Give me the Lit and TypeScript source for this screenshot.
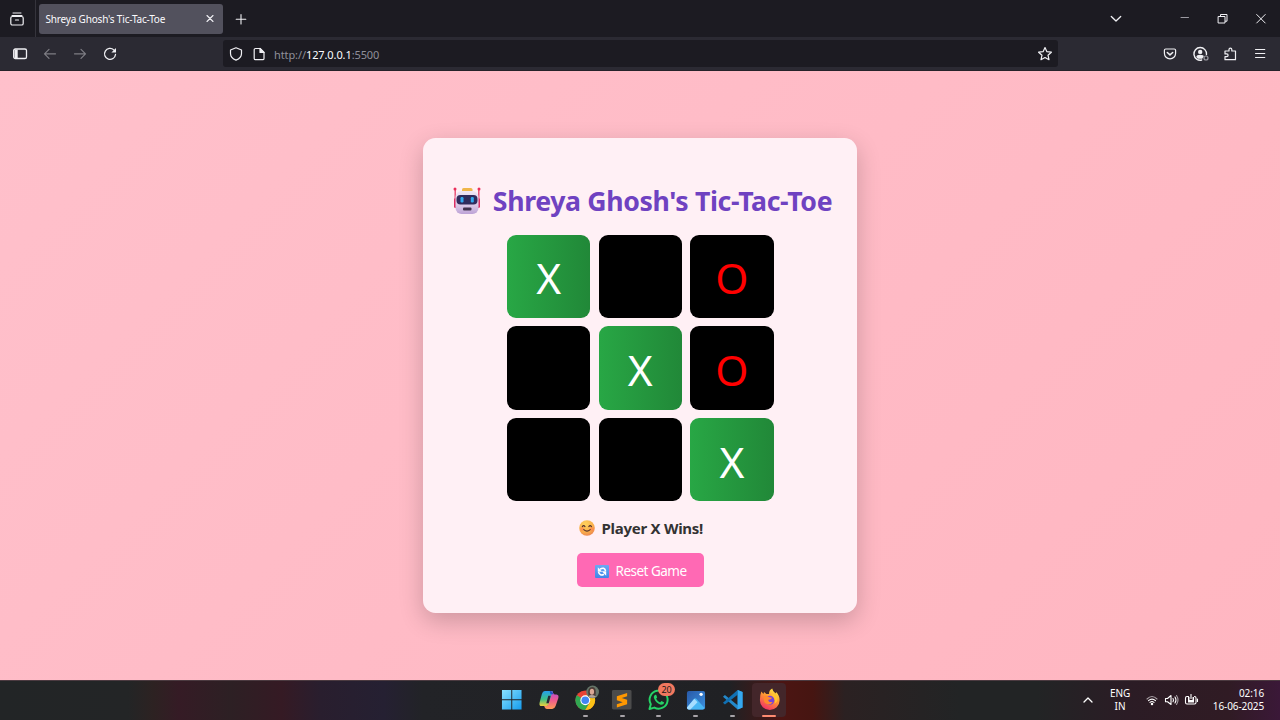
import { LitElement, html, svg, css } from "lit";
import { customElement, state } from "lit/decorators.js";
import { classMap } from "lit/directives/class-map.js";

const robot = html`<svg class="robot" viewBox="0 0 28 28">
  <defs><linearGradient id="rb" x1="0" y1="0" x2="0" y2="1"><stop offset="0" stop-color="#f0e6f6"/><stop offset=".6" stop-color="#dccbe8"/><stop offset="1" stop-color="#bda2d6"/></linearGradient></defs>
  <rect x="1.500" y="2" width="1.400" height="11" fill="#e8476f"/><rect x="25.100" y="2" width="1.400" height="11" fill="#e8476f"/>
  <circle cx="2" cy="2" r="1.500" fill="#ea2f5b"/><circle cx="26" cy="2" r="1.500" fill="#ea2f5b"/>
  <rect x="1" y="11" width="4" height="10" rx="1.600" fill="#dc2f64"/><rect x="23" y="11" width="4" height="10" rx="1.600" fill="#dc2f64"/>
  <rect x="9" y="1" width="10.500" height="5" rx="1.600" fill="#f0b64a"/>
  <rect x="2.500" y="4" width="23" height="23" rx="6" fill="url(#rb)"/>
  <rect x="3.500" y="8" width="21" height="9.500" rx="4" fill="#302b5c"/>
  <rect x="7.500" y="10" width="3" height="5.500" rx="1.200" fill="#32a8ef"/><rect x="17.800" y="10" width="3" height="5.500" rx="1.200" fill="#32a8ef"/>
  <rect x="10" y="20.500" width="8.500" height="3" rx="1" fill="#42334e"/></svg>`;

const smile = html`<svg class="smile" viewBox="0 0 16 16">
  <defs><radialGradient id="sm" cx=".4" cy=".25" r=".85"><stop offset="0" stop-color="#ffd35c"/><stop offset=".6" stop-color="#f9ae4c"/><stop offset="1" stop-color="#e87a50"/></radialGradient></defs>
  <circle cx="8" cy="8" r="7.800" fill="url(#sm)"/><circle cx="3.200" cy="9" r="2" fill="#ff7a4d" opacity=".5"/><circle cx="12.800" cy="9" r="2" fill="#ff7a4d" opacity=".5"/>
  <path d="M3.300 6.600q1.300-2 2.700 0M9.800 6.600q1.300-2 2.700 0M4.800 9.700q3.200 2.800 6.400 0" fill="none" stroke="#53302c" stroke-width="1.100" stroke-linecap="round"/></svg>`;

const refresh = html`<svg class="refresh" viewBox="0 0 14 13">
  <defs><linearGradient id="rf" x1="0" y1="0" x2="0" y2="1"><stop offset="0" stop-color="#6ba9f2"/><stop offset="1" stop-color="#3f86ea"/></linearGradient></defs>
  <rect width="14" height="13" rx="1" fill="url(#rf)"/>
  <path d="M5 4.200Q9.300 1.500 10.600 6M9 9.200Q5 11.500 3.500 7" fill="none" stroke="#fff" stroke-width="1.600"/>
  <path d="M2.800 2.300v4.400h4.400zM11.200 10.700V6.300H6.800z" fill="#fff"/></svg>`;

@customElement("browser-chrome")
export class BrowserChrome extends LitElement {
  static styles = css`
    :host { display: block; font-family: "Noto Sans", "Open Sans", sans-serif; color: #fbfbfe; }
    svg { display: block; flex: none; fill: none; stroke: #f0f0f4; stroke-width: 1.2; stroke-linecap: round; stroke-linejoin: round; }
    .tabs { height: 37px; background: #1c1b22; display: flex; align-items: center; }
    .view { width: 36px; height: 37px; border-right: 1px solid #35343c; display: grid; place-items: center; padding-right: 2px; box-sizing: border-box; }
    .tab { margin-left: 3px; width: 184px; height: 30px; box-sizing: border-box; border-radius: 3px; background: #52515d; display: flex; align-items: center; justify-content: space-between; padding: 1px 8px 0 6.500px; }
    .label { font-size: 10px; line-height: 14px; letter-spacing: -0.180px; white-space: nowrap; }
    .plus { margin-left: 12px; }
    .grow { flex: 1; }
    .list { margin-right: 56px; }
    .window { display: flex; align-items: center; gap: 26px; margin-right: 13px; }
    .bar { height: 34px; box-sizing: border-box; background: #2b2a33; border-bottom: 1px solid #252229; display: flex; align-items: center; }
    .nav { display: flex; gap: 14px; padding-left: 12px; width: 223px; box-sizing: border-box; }
    .dim { opacity: .42; }
    .url { width: 835px; height: 27px; box-sizing: border-box; border-radius: 3px; background: #1c1b22; display: flex; align-items: center; padding: 0 5px; }
    .page { margin-left: 7px; }
    .address { margin-left: 7px; flex: 1; color: #8f8f99; font-size: 11px; line-height: 16px; letter-spacing: -0.1px; padding-top: 2px; }
    .host { color: #fbfbfe; }
    .tools { flex: 1; display: flex; justify-content: flex-end; gap: 14px; padding-right: 12px; }
  `;
  render() {
    return html`
      <div class="tabs">
        <div class="view"><svg width="16" height="16" viewBox="0 0 16 16"><path d="M4 2h8M3 4.5h10" stroke-width="1"/><rect x="1.8" y="5.5" width="12.4" height="8.5" rx="1.6"/><path d="M6.5 9h3"/></svg></div>
        <div class="tab"><span class="label">Shreya Ghosh's Tic-Tac-Toe</span><svg width="10" height="10" viewBox="0 0 10 10"><path d="m2 1.5 6 6m0-6-6 6" stroke-width="1.100"/></svg></div>
        <svg class="plus" width="12" height="12" viewBox="0 0 12 12"><path d="M6 1.5v9.5M1.2 6.2h9.6" stroke-width="1.1"/></svg>
        <div class="grow"></div>
        <svg class="list" width="14" height="14" viewBox="0 0 14 14"><path d="m2.300 4.500 4.700 4.500L11.700 4.500" stroke-width="1.300"/></svg>
        <div class="window">
          <svg width="12" height="12" viewBox="0 0 12 12"><path d="M2 4.500h7.500" stroke="#9b9aa2" stroke-width="1"/></svg>
          <svg width="12" height="12" viewBox="0 0 12 12"><path d="M1.500 3.500h6.500v6.500H1.500zM3.500 3.300V1.500H10v6.700H8.300" stroke-width="1"/></svg>
          <svg width="12" height="12" viewBox="0 0 12 12"><path d="m1.700 1.500 8.500 8.500m0-8.500-8.500 8.500" stroke-width="1"/></svg>
        </div>
      </div>
      <div class="bar">
        <div class="nav">
          <svg width="16" height="16" viewBox="0 0 16 16"><rect x="1.700" y="3" width="12.800" height="9.500" rx="1.600" stroke-width="1.300"/><path d="M2.500 3.500h3.200v8.700H2.500z" fill="#f0f0f4" stroke="none"/></svg>
          <svg class="dim" width="16" height="16" viewBox="0 0 16 16"><path d="M13.500 7.800H2.800M7 3.300 2.500 7.800 7 12.300"/></svg>
          <svg class="dim" width="16" height="16" viewBox="0 0 16 16"><path d="M2.500 7.800h10.700M9 3.300l4.500 4.500L9 12.300"/></svg>
          <svg width="16" height="16" viewBox="0 0 16 16"><path d="M13.500 8.500A5.500 5.500 0 1 1 11.800 3.900l1.400 1.400" stroke-width="1.300"/><path d="M14 2v4.600H9.400z" fill="#f0f0f4" stroke="none"/></svg>
        </div>
        <div class="url">
          <svg width="16" height="16" viewBox="0 0 16 16"><path d="M8 1.800 13.500 4v3.400c0 3-2.500 5.500-5.500 6.700C5 12.900 2.500 10.400 2.500 7.400V4z"/></svg>
          <svg class="page" width="16" height="16" viewBox="0 0 16 16"><path d="M4.500 2.500h4.500l4 4v5.900a1.300 1.300 0 0 1-1.300 1.300H4.500a1.300 1.300 0 0 1-1.300-1.300V3.800a1.300 1.300 0 0 1 1.300-1.300z"/><path d="M9 2.500v4h4z" fill="#f0f0f4"/></svg>
          <span class="address">http://<span class="host">127.0.0.1</span>:5500</span>
          <svg width="16" height="16" viewBox="0 0 16 16"><path d="m8 1.600 1.900 4.100 4.500.5-3.400 3 1 4.500L8 11.500l-4 2.200 1-4.500-3.400-3 4.500-.5z"/></svg>
        </div>
        <div class="tools">
          <svg width="16" height="16" viewBox="0 0 16 16"><path d="M3.700 3h8.600a1.300 1.300 0 0 1 1.300 1.300v3a5.600 5.600 0 0 1-11.200 0v-3A1.300 1.300 0 0 1 3.700 3z"/><path d="m5.300 6.500 2.700 2.400 2.700-2.400" stroke-width="1.500"/></svg>
          <svg width="16" height="16" viewBox="0 0 16 16" overflow="visible"><path d="M14.500 8.500A6.300 6.300 0 1 0 9.700 14" stroke-width="1.400"/><circle cx="8.200" cy="5.900" r="2.200" fill="#f0f0f4" stroke="none"/><path d="M4.300 11Q4.500 8.800 8.200 8.800t3.500 1.700l-1.500 2.200H6z" fill="#f0f0f4" stroke="none"/><circle cx="14" cy="12" r="2" stroke="#9b9aa2"/></svg>
          <svg width="16" height="16" viewBox="0 0 16 16"><path d="M3 5H7V3.500a1.400 1.400 0 0 1 2.800 0V5H13.500v8.700H3v-3h1.700a1.400 1.400 0 0 0 0-2.800H3z"/></svg>
          <svg width="16" height="16" viewBox="0 0 16 16"><path d="M3.500 3.500h9.300M3.500 7.500h9.300M3.500 11.500h9.300" stroke-width="1"/></svg>
        </div>
      </div>`;
  }
}

@customElement("tic-tac-toe")
export class TicTacToe extends LitElement {
  static styles = css`
    :host { display: grid; place-items: center; background: linear-gradient(135deg, #ffc0cb, #ffb6c1); font-family: "Noto Sans", "Open Sans", sans-serif; }
    svg { display: block; flex: none; }
    .card { width: 433.500px; height: 475px; box-sizing: border-box; background: #fff0f5; border-radius: 12.500px; box-shadow: 0 8px 25px rgba(0, 0, 0, .2); display: flex; flex-direction: column; align-items: center; padding: 43px 0 0 .600px; }
    .title { margin: 0; height: 40px; display: flex; align-items: center; gap: 11.500px; color: #6f42c1; font-size: 26.670px; line-height: 40px; font-weight: 700; white-space: nowrap; padding-left: 5px; }
    .title span { letter-spacing: -.34px; }
    .robot { width: 28px; height: 28px; }
    .board { margin-top: 13.800px; display: grid; grid-template-columns: repeat(3, 83.330px); grid-auto-rows: 83.330px; gap: 8.330px; }
    .cell { border-radius: 9px; background: #000; display: grid; place-items: center; font-size: 42.500px; line-height: 1; padding-top: 4px; box-sizing: border-box; color: #f00; }
    .win { background: linear-gradient(90deg, #28a745, #218838); color: #fff; }
    .status { margin-top: 15px; height: 24px; display: flex; align-items: center; gap: 7px; font-size: 15px; line-height: 24px; font-weight: 700; color: #333; white-space: nowrap; letter-spacing: -.280px; padding-left: 1px; }
    .smile { width: 16px; height: 16px; }
    .reset { margin-top: 12.800px; width: 127px; height: 34px; border: 0; border-radius: 5px; background: #ff69b4; color: #fff; font: 13.500px/20px "Noto Sans", "Open Sans", sans-serif; letter-spacing: -.500px; display: flex; align-items: center; justify-content: center; gap: 6px; padding: 2px 0 0 1.500px; white-space: nowrap; }
    .refresh { width: 14px; height: 13px; }
  `;
  @state() private board = ["X", "", "O", "", "X", "O", "", "", "X"];
  private winners = new Set([0, 4, 8]);
  render() {
    return html`<div class="card">
      <h1 class="title">${robot}<span>Shreya Ghosh's Tic-Tac-Toe</span></h1>
      <div class="board">${this.board.map((m, i) => html`<div class=${classMap({ cell: true, win: this.winners.has(i) })}>${m}</div>`)}</div>
      <div class="status">${smile}<span>Player X Wins!</span></div>
      <button class="reset">${refresh}<span>Reset Game</span></button>
    </div>`;
  }
}

const apps = [
  svg`<defs><linearGradient id="w" x1="0" y1="0" x2="1" y2="1"><stop stop-color="#8ae2ff"/><stop offset="1" stop-color="#149bee"/></linearGradient></defs><path d="M2 2h9.500v9.500H2zM12.500 2H22v9.500h-9.500zM2 12.500h9.500V22H2zM12.500 12.500H22V22h-9.500z" fill="url(#w)"/>`,
  svg`<defs><linearGradient id="c1" x1="0" y1="0" x2="0" y2="1"><stop stop-color="#249df0"/><stop offset=".55" stop-color="#3ec083"/><stop offset="1" stop-color="#f4d13a"/></linearGradient><linearGradient id="c2" x1="0" y1="0" x2="0" y2="1"><stop stop-color="#b14edb"/><stop offset=".5" stop-color="#ee5890"/><stop offset="1" stop-color="#ff9d55"/></linearGradient></defs><path d="M8 3h7q2 0 1.300 2.200L13 16q-.8 2.500-3 2.500H4.500Q2 18.500 2.600 15L5 6q.8-3 3-3z" fill="url(#c1)"/><path d="M14 3q2 0 2.700 2.400.4 1.300 1.800 1.300H20q2.500.5 1.800 3.500L19 18.500q-1 3-3.500 3H10q-2 0-2.500-2.500l-.2-.6H9q2.300 0 3-2.400L15 6z" fill="url(#c2)"/><path d="m11.500 8-2 7.500H12L14 8z" fill="#292737"/><path d="M13 3q3 0 3.700 3.500h-3z" fill="#1f54c7"/>`,
  svg`<circle cx="11.500" cy="12.500" r="10" fill="#e94335"/><path d="M11.500 12.500 2.800 7.500A10 10 0 0 0 11.500 22.500l4.500-7.500z" fill="#31a852"/><path d="M11.500 7.500h8.700a10 10 0 0 1-8.700 15l4.500-7.500z" fill="#fbc116"/><circle cx="11.500" cy="12.500" r="5" fill="#fff"/><circle cx="11.500" cy="12.500" r="3.900" fill="#4285f4"/><circle cx="19" cy="4" r="6.500" fill="#657568"/><path d="M15 8.500q-2-9 3.500-9.500 5 0 3.500 9.500z" fill="#4a3a36"/><ellipse cx="18.300" cy="3.800" rx="2.200" ry="3" fill="#dca894"/><path d="M14.500 8.700q3-3 8 0-3.500 2.500-8 0z" fill="#b3a39b"/>`,
  svg`<rect x="2" y="2" width="20" height="20" rx="1.500" fill="#4b4b4b"/><path d="M17.500 5 7 8.500v4l6 2-6 2V20l10.500-3.500V12l-5.500-1.800 5.500-1.700z" fill="#ff9800"/>`,
  svg`<path d="m2.500 21.500 1.400-5A9.200 9.200 0 1 1 7.500 20z" fill="#1f2424" stroke="#25d366" stroke-width="2" stroke-linejoin="round"/><path d="M8.500 6.800q-2.400 1.500-1.100 4.200 2 4.700 6.600 6.100 3 .3 3.600-2.300l-2.800-1.600-1.500 1.500q-2.900-1.400-4-3.800l1.100-1.300-1-2.600z" fill="#25d366"/>`,
  svg`<defs><linearGradient id="p" x1="0" y1="0" x2="1" y2="1"><stop stop-color="#2859a8"/><stop offset="1" stop-color="#3c91df"/></linearGradient></defs><rect x="3" y="3" width="18.500" height="19" rx="2" fill="url(#p)"/><path d="m3 20 7.500-9q1-1 2 0L21 20.500q-.5 1.500-2 1.500H5q-2 0-2-2z" fill="#49b6f4"/><path d="m3 20 7.500-9 3.300 3.500L6.500 22H5q-2 0-2-2z" fill="#a7ddff"/><circle cx="17.500" cy="6.500" r="1.700" fill="#fff"/>`,
  svg`<path d="m17 2 5 2.200v15.600L17 22 2 9l2-1.800L17 17.500z" fill="#2489ca"/><path d="M17 2 2 15l2 1.800L17 6.800z" fill="#1070b3"/><path d="m17 2 5 2.200v15.600L17 22z" fill="#35a8ef"/>`,
  svg`<defs><linearGradient id="f" x1=".8" y1="0" x2=".3" y2="1"><stop stop-color="#fff044"/><stop offset=".45" stop-color="#ff9832"/><stop offset="1" stop-color="#f22e67"/></linearGradient></defs><path d="M3.500 3.500 5.500 6l.7-2L8.500 6h2.800Q11 2.500 14.500.5q.5 3 3.500 5l.5-1.500Q22.500 8 22 13a10 9.500 0 0 1-20 0Q1.800 7 3.500 3.500z" fill="url(#f)"/><circle cx="12" cy="12.500" r="4.700" fill="#7542d9"/><path d="M6 8.500Q9 7 11.500 9.500l3 .5q-1 2-4 2 0 3 4.500 2.200-1.500 3-5.500 2.500Q5 15.500 6 8.500z" fill="#ff892d"/><path d="M13.500 7q5 3 3.500 9 4-2 2.500-8L17 5z" fill="#ffc42f"/>`,
];

@customElement("task-bar")
export class TaskBar extends LitElement {
  static styles = css`
    :host { display: grid; grid-template-columns: 1fr auto 1fr; align-items: center; box-sizing: border-box; border-top: 1px solid #4b3a40; font-family: "Noto Sans", "Open Sans", sans-serif; color: #fff;
      background: linear-gradient(90deg, #222526 0%, #232526 10%, #2d2222 12%, #351b25 14%, #2d2024 18%, #351a24 22%, #291e2e 25%, #252032 30%, #222327 33%, #202124 57%, #4c1513 61%, #461511 63.500%, #2b2122 66%, #222425 75%, #222425 81%, #2b1c25 88%, #301b24 96%, #3b1838 100%); }
    svg { display: block; flex: none; }
    .apps { grid-column: 2; display: flex; gap: 2.800px; margin: 0 0 1px 1px; }
    .app { position: relative; width: 34px; height: 34px; border-radius: 4px; display: flex; flex-direction: column; align-items: center; padding-top: 5px; box-sizing: border-box; gap: 3px; }
    .icon { width: 23.500px; height: 23.500px; overflow: visible; }
    .dot { width: 5px; height: 2px; border-radius: 1px; background: #a8a4a9; }
    .active { background: #43262a; }
    .active .dot { width: 14px; background: #ff8b71; }
    .badge { position: absolute; left: 16px; top: 0; width: 17px; height: 13px; border-radius: 7px; background: #f1785f; color: #22191a; font-size: 9px; line-height: 13px; text-align: center; letter-spacing: -.200px; }
    .tray { display: flex; justify-content: flex-end; align-items: center; padding: 0 16px 1.500px 0; font-size: 10px; line-height: 13px; letter-spacing: -.100px; }
    .lang { margin-left: 14px; width: 24px; text-align: center; }
    .system { display: flex; gap: 5px; margin-left: 13px; padding-top: 1px; }
    .clock { width: 58px; margin-left: 7px; text-align: right; white-space: nowrap; }
    .line { fill: none; stroke: #fff; stroke-width: 1.100; stroke-linecap: round; stroke-linejoin: round; }
  `;
  render() {
    return html`
      <div class="apps">${apps.map((icon, i) => html`<div class=${classMap({ app: true, active: i === 7 })}>
        <svg class="icon" viewBox="0 0 24 24">${icon}</svg>${i > 1 ? html`<i class="dot"></i>` : ""}${i === 4 ? html`<span class="badge">20</span>` : ""}</div>`)}</div>
      <div class="tray">
        <svg class="line" width="12" height="12" viewBox="0 0 12 12"><path d="m2 8 4-4 4 4" stroke-width="1.300"/></svg>
        <div class="lang">ENG<br>IN</div>
        <div class="system">
          <svg class="line" width="14" height="14" viewBox="0 0 14 14"><path d="M2 6q5-5 10 0" stroke="#a9a1a6"/><path d="M3.500 7.700q3.500-3.300 7 0M5 9.400q2-1.700 4 0"/><circle cx="7" cy="11" r=".7" fill="#fff"/></svg>
          <svg class="line" width="15" height="14" viewBox="0 0 15 14"><path d="M1.500 5.500h2L7 2.500v9L3.500 8.800h-2z"/><path d="M9 5.500q1 1.600 0 3.200M11 4q2 3 0 6"/><path d="M12.500 2.500q3 4.500 0 9" stroke="#a9a1a6"/></svg>
          <svg class="line" width="15" height="14" viewBox="0 0 15 14"><path d="M4.500 3.500H3A1.500 1.500 0 0 0 1.500 5v4.500A1.500 1.500 0 0 0 3 11h7.500A1.500 1.500 0 0 0 12 9.500V5a1.500 1.500 0 0 0-1.500-1.500M13.500 6v2.500"/><path d="M4 4h1.500v3h3V4H10v5.500H4z" fill="#fff" stroke="none"/><path d="M7 1.500v4"/></svg>
        </div>
        <div class="clock">02:16<br>16-06-2025</div>
      </div>`;
  }
}

@customElement("app-root")
export class AppRoot extends LitElement {
  static styles = css`
    :host { display: grid; grid-template-rows: 71px 609px 40px; width: 1280px; height: 720px; overflow: hidden; }
  `;
  render() {
    return html`<browser-chrome></browser-chrome><tic-tac-toe></tic-tac-toe><task-bar></task-bar>`;
  }
}
